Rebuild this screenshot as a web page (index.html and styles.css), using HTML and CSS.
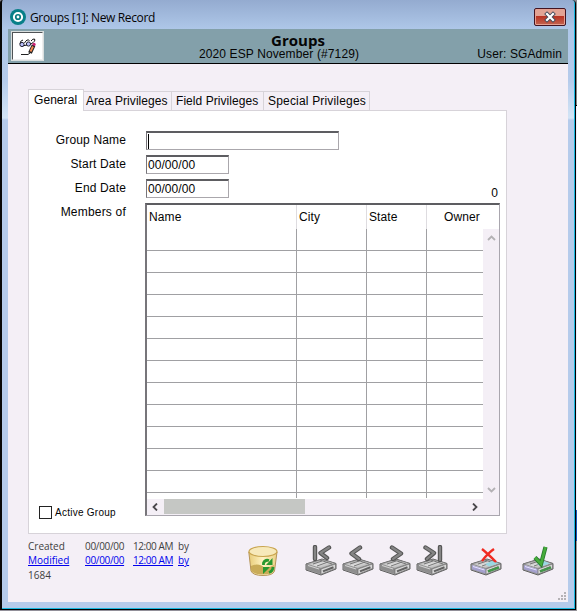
FILE: index.html
```
<!DOCTYPE html>
<html lang="en">
<head>
<meta charset="utf-8">
<title>Groups [1]: New Record</title>
<link rel="stylesheet" href="styles.css">
</head>
<body>
<svg class="defs" width="0" height="0" aria-hidden="true">
  <defs>
    <linearGradient id="metal" x1="0" y1="0" x2="1" y2="1"><stop offset="0" stop-color="#8e8e8e"/><stop offset=".5" stop-color="#dedede"/><stop offset="1" stop-color="#888"/></linearGradient>
    <linearGradient id="gold" x1="0" y1="0" x2="1" y2="0"><stop offset="0" stop-color="#e8cc78"/><stop offset=".5" stop-color="#fff3c4"/><stop offset="1" stop-color="#ead084"/></linearGradient>
    <symbol id="drive" viewBox="0 0 32 32">
      <path d="M1 19 17 14 31 18.5V24L16 30 1 25Z" fill="#a8a8a8" stroke="#626262"/>
      <path d="M1.5 19 17 14.5 30.5 18.5 16 23.5Z" fill="url(#metal)" stroke="#777" stroke-width=".6"/>
      <path d="M1.5 19.5 16 24V29L1.5 24.5Z" fill="#8e8e8e"/>
      <path d="M3 20.5 14 24" stroke="#d4d4d4"/>
      <path d="M16 24 30.5 19V23.5L16 29.3Z" fill="#d8d8d8" stroke="#666" stroke-width=".6"/>
      <path d="M18 26.4 28.5 22.3" stroke="#626262" stroke-width="2"/>
      <path d="M8 19 17 16M12 21 23 17M15 15 27 19" stroke="#777" stroke-width="1"/>
    </symbol>
    <symbol id="color-drive" viewBox="0 0 32 32">
      <use href="#drive"/>
      <path d="M2 20 15.5 24V28.5L2 24.3Z" fill="#a5a1ce"/><path d="M3 21.5 14.5 25" stroke="#e8e4ff"/>
      <path d="M15 19 22 16 28 18.5 19 21.5Z" fill="#9bd7e2"/>
      <path d="M18 26.3 29 22.3" stroke="#45964b" stroke-width="2.4"/>
    </symbol>
  </defs>
</svg>
<div class="desktop">
<main class="window">
  <header class="titlebar">
    <svg class="logo" width="16" height="16" viewBox="0 0 16 16"><circle cx="8" cy="8" r="8" fill="#087f88"/><circle cx="8" cy="8" r="4.1" fill="#087980" stroke="#fff" stroke-width="2"/><circle cx="8" cy="8" r="1.4" fill="#fff"/></svg>
    <h1>Groups [1]: New Record</h1>
    <button class="close" aria-label="Close"><svg width="14" height="12" viewBox="0 0 14 12"><path d="M4 3 10 9M10 3 4 9" stroke="#444b5b" stroke-width="4" stroke-linecap="square"/><path d="M4 3 10 9M10 3 4 9" stroke="#fff" stroke-width="2.2" stroke-linecap="square"/></svg></button>
  </header>
  <div class="content">
    <section class="banner">
      <div class="edit"><svg width="20" height="20" viewBox="0 0 20 20" fill="none"><path d="M2 8Q2 4.500 5 4M6.500 7Q9 2.500 11.500 4.500M4 10 9 9M13 8Q18 5 16.500 3 15 2.500 13 5" stroke="#111"/><circle cx="4" cy="8.500" r="2.100" fill="#bcc3ff" stroke="#223"/><circle cx="10.500" cy="8" r="2.100" fill="#bcc3ff" stroke="#223"/><circle cx="16" cy="8.500" r="1.700" fill="#ce2375"/><path d="M15.500 9.500 12 17" stroke="#222" stroke-width="4"/><path d="M15 10.500 12.500 15.500" stroke="#f58a50" stroke-width="2"/><path d="M3 18.500H10L12 17" stroke="#222"/></svg></div>
      <div class="heading"><strong>Groups</strong><span>2020 ESP November (#7129)</span></div>
      <div class="user">User: SGAdmin</div>
    </section>
    <nav class="tabs"><span class="active">General</span><span class="area">Area Privileges</span><span class="field">Field Privileges</span><span class="special">Special Privileges</span></nav>
    <section class="panel">
      <div class="form">
        <label>Group Name</label><div class="input wide"><i class="caret"></i></div>
        <label>Start Date</label><div class="input">00/00/00</div>
        <label>End Date</label><div class="input">00/00/00</div><span class="count">0</span>
      </div>
      <div class="members">
        <label>Members of</label>
        <div class="list">
          <div class="columns"><span>Name</span><span>City</span><span>State</span><span class="owner">Owner</span></div>
          <div class="list-body">
            <div class="cells"><span></span><span></span><span></span><span></span></div>
            <div class="vscroll"><svg width="9" height="6" viewBox="0 0 9 6"><path d="M1 5 4.5 1.5 8 5"/></svg><svg width="9" height="6" viewBox="0 0 9 6"><path d="M1 1 4.5 4.5 8 1"/></svg></div>
          </div>
          <div class="hscroll"><svg width="6" height="8" viewBox="0 0 6 8"><path d="M5 .5 1.5 4 5 7.5"/></svg><div class="thumb"></div><svg class="right" width="6" height="8" viewBox="0 0 6 8"><path d="M1 .5 4.5 4 1 7.5"/></svg></div>
        </div>
      </div>
      <div class="check"><span class="box"></span><span>Active Group</span></div>
    </section>
    <footer>
      <div class="meta">
        <span class="created">Created</span><span class="date">00/00/00</span><span class="time">12:00 AM</span><span>by</span>
        <a class="modified">Modified</a><a class="date">00/00/00</a><a class="time">12:00 AM</a><a>by</a>
        <span class="record">1684</span>
      </div>
      <div class="tools">
        <svg class="trash" width="32" height="32" viewBox="0 0 32 32"><path d="M1.800 7 4 26Q6 30.500 16 30.500T27.500 26L30 7Z" fill="url(#gold)" stroke="#b5945a"/><path d="M4 21Q12 17 19 24L27 20 26 26Q24 29.500 15 29.500T4 25Z" fill="#c9ab58"/><ellipse cx="16" cy="6.500" rx="14" ry="5" fill="#f7e9ba" stroke="#c8a44e" stroke-width="1.200"/><path d="M16.500 20V18Q18 14.500 22 15.500M22 27.500Q26 26 26 22" fill="none" stroke="#28982f" stroke-width="2.800"/><path d="M25.500 13V20H19ZM16 29V22H23Z" fill="#28982f"/></svg>
        <svg width="32" height="32" viewBox="0 0 32 32"><use href="#drive"/><path d="M10 2V14M24 2.500 15.500 8 22 13" class="arrow"/><path d="M10 2V14M24 2.500 15.500 8 22 13" class="shine"/></svg>
        <svg width="32" height="32" viewBox="0 0 32 32"><use href="#drive"/><path d="M18 2.500 9.500 8.500 17 14" class="arrow"/><path d="M18 2.500 9.500 8.500 17 14" class="shine"/></svg>
        <svg width="32" height="32" viewBox="0 0 32 32"><use href="#drive"/><path d="M13 2.500 22 8.500 14 14" class="arrow"/><path d="M13 2.500 22 8.500 14 14" class="shine"/></svg>
        <svg width="32" height="32" viewBox="0 0 32 32"><use href="#drive"/><path d="M9.500 2.500 18 8 11 14M24 2V15" class="arrow"/><path d="M9.500 2.500 18 8 11 14M24 2V15" class="shine"/></svg>
        <svg class="cancel" width="32" height="32" viewBox="0 0 32 32"><use href="#color-drive"/><path d="M12 4Q17 8 26 17M24 4Q18 8 12 16" stroke="#f02b22" stroke-width="2.400" fill="none"/></svg>
        <svg class="accept" width="32" height="32" viewBox="0 0 32 32"><use href="#color-drive"/><path d="M13 12.500 19 19 23.500 2" stroke="#27782d" stroke-width="4.200" fill="none"/><path d="M13 12.500 19 19 23.500 2" stroke="#46ac3b" stroke-width="2.600" fill="none"/></svg>
      </div>
      <svg class="grip" width="8" height="8" viewBox="0 0 8 8"><path d="M6 0h2v2H6zM3 3h2v2H3zM6 3h2v2H6zM0 6h2v2H0zM3 6h2v2H3zM6 6h2v2H6z" fill="#b5b2b6"/></svg>
    </footer>
  </div>
</main>
<aside class="behind"></aside>
</div>
</body>
</html>
```
FILE: styles.css
```
* { box-sizing: border-box; }
body { margin: 0; width: 577px; height: 611px; overflow: hidden; background: #929099; color: #050505; font: 12px/14px "Liberation Sans", sans-serif; }
.defs { position: absolute; }
.desktop { display: flex; height: 611px; }
.window { width: 576px; height: 610px; border-right: 1px solid #000; border-bottom: 1px solid #000; border-left: 2px solid #080808; background: linear-gradient(#94abd0 0, #aec7e8 29px, #b5cbeb 80px, #d3e5f6 118px, #b5cbeb 120px); border-radius: 3px 4px 0 0; box-shadow: inset -1px -1px #18b7df; padding: 0 7px 7px 6px; }
.behind { width: 1px; background: linear-gradient(#888 0 105px, #000 105px 106px, #eef 106px 510px, #1556bd 510px 541px, #999 541px); }
.titlebar { display: flex; height: 29px; align-items: flex-start; }
.logo { margin: 9px 0 0 2px; }
h1 { margin: 9px 0 0 4px; font: 12px/17px "Open Sans", sans-serif; letter-spacing: -.36px; }
.close { display: flex; align-items: center; justify-content: center; width: 32px; height: 18px; padding: 0; margin: 8px 2px 0 auto; border: 1px solid #431421; border-radius: 2px; box-shadow: inset 0 0 0 1px #e5a091; background: linear-gradient(#e2a394 0 45%, #b83222 46%, #c36551); }
.close path { fill: none; }
.content { width: 560px; height: 573px; background: #f4eff6; overflow: hidden; }
.banner { display: flex; height: 35px; border-bottom: 1px solid #000; background: #83a0aa; }
.edit { width: 31px; height: 28px; margin: 3px 0 0 4px; border: 1px solid #4f5355; border-right-color: #eee; border-bottom-color: #eee; background: #fff; box-shadow: 0 0 0 1px #d8dede; display: flex; justify-content: center; align-items: center; }
.heading { width: 180px; margin-left: 165px; display: flex; flex-direction: column; align-items: center; }
.heading strong { margin: 4px 0 0; font: 700 15px/15px "Open Sans", sans-serif; }
.heading span { line-height: 12px; margin-right: 38px; letter-spacing: .12px; white-space: nowrap; }
.user { margin: 18px 6px 0 auto; letter-spacing: .1px; }
.tabs { display: flex; align-items: flex-end; height: 46px; margin-left: 20px; }
.tabs span { height: 19px; border: 1px solid #d7d3d9; border-left: 0; border-bottom: 0; padding: 2px 0 0 2px; letter-spacing: .06px; white-space: nowrap; }
.tabs .active { width: 56px; height: 22px; margin-bottom: -1px; padding: 3px 0 0 5px; border-left: 1px solid #d7d3d9; background: #fff; position: relative; }
.tabs .area { width: 88px; }
.tabs .field { width: 92px; padding-left: 4px; }
.tabs .special { width: 106px; padding-left: 4px; letter-spacing: .18px; }
.panel { width: 479px; height: 424px; margin-left: 20px; border: 1px solid #d7d3d9; background: #fff; }
.form { display: grid; grid-template-columns: 97px 193px 1fr; grid-template-rows: 24px 24px 24px; column-gap: 20px; padding-top: 20px; }
.form label { grid-column: 1; text-align: right; padding-top: 2px; letter-spacing: .15px; }
.input { grid-column: 2; width: 83px; height: 19px; border: 1px solid #aaa7ac; border-top: 2px solid #5d5d61; border-left-color: #77757a; padding: 1px; line-height: 15px; letter-spacing: .05px; }
.input.wide { width: 193px; }
.caret { display: block; width: 1px; height: 15px; background: #000; }
.count { grid-column: 3; justify-self: end; padding: 7px 8px 0 0; }
.members { display: flex; }
.members > label { width: 97px; margin-right: 19px; padding-top: 2px; text-align: right; letter-spacing: .2px; }
.list { width: 355px; height: 313px; border: 1px solid #a9a6ae; border-left: 2px solid #77757a; border-top: 2px solid #5d5d61; }
.columns, .cells { display: grid; grid-template-columns: 150px 70px 60px 1fr; }
.columns { height: 24px; line-height: 24px; letter-spacing: .1px; }
.columns span { border-right: 1px solid #dedce0; padding-left: 2px; }
.columns .owner { border-right: 0; padding-left: 17px; }
.list-body { display: flex; height: 270px; }
.cells { width: 336px; background: repeating-linear-gradient(transparent 0 21px, #a0a0a3 21px 22px); }
.cells span { border-right: 1px solid #a0a0a3; height: 269px; }
.cells span:last-child { border: 0; }
.vscroll { width: 16px; display: flex; flex-direction: column; align-items: center; justify-content: space-between; padding: 6px 0; background: #f4eff6; }
.vscroll path, .hscroll path { fill: none; stroke: #b3b1b4; stroke-width: 1.8; }
.hscroll { display: flex; align-items: center; height: 16px; background: #f4eff6; padding: 0 21px 1px 5px; }
.hscroll path { stroke: #49474b; }
.thumb { width: 141px; height: 15px; margin-left: 6px; background: #c5c7c4; }
.right { margin-left: auto; }
.check { display: flex; align-items: center; margin: -11px 0 0 10px; font-size: 10px; letter-spacing: .26px; width: 95px; }
.check span:last-child { padding-top: 1px; white-space: nowrap; }
.box { width: 13px; height: 13px; margin-right: 3px; border: 1px solid #222; }
footer { display: grid; grid-template-columns: 170px 1fr; padding: 6px 2px 0 20px; height: 68px; }
.meta { display: grid; grid-template-columns: 57px 48px 45px 20px; grid-template-rows: 14px 15px 15px; align-content: start; color: #3e3e40; font: 10px/14px "Open Sans", sans-serif; white-space: nowrap; margin-top: -1px; }
.meta a { color: #0000ed; text-decoration: underline; }
.meta .date { letter-spacing: -.32px; }
.meta .time { letter-spacing: -.42px; }
.tools { display: flex; margin: 5px 0 0 49px; height: 32px; }
.tools svg { flex-shrink: 0; margin-right: 5px; }
.tools .trash { margin-right: 26px; }
.tools .cancel { margin-left: 17px; margin-right: 20px; }
.arrow { fill: none; stroke: #555; stroke-width: 4.4; stroke-linecap: round; stroke-linejoin: round; }
.shine { fill: none; stroke: #858585; stroke-width: 2.2; stroke-linecap: round; stroke-linejoin: round; }
.grip { grid-column: 2; justify-self: end; margin-top: 7px; }
```
